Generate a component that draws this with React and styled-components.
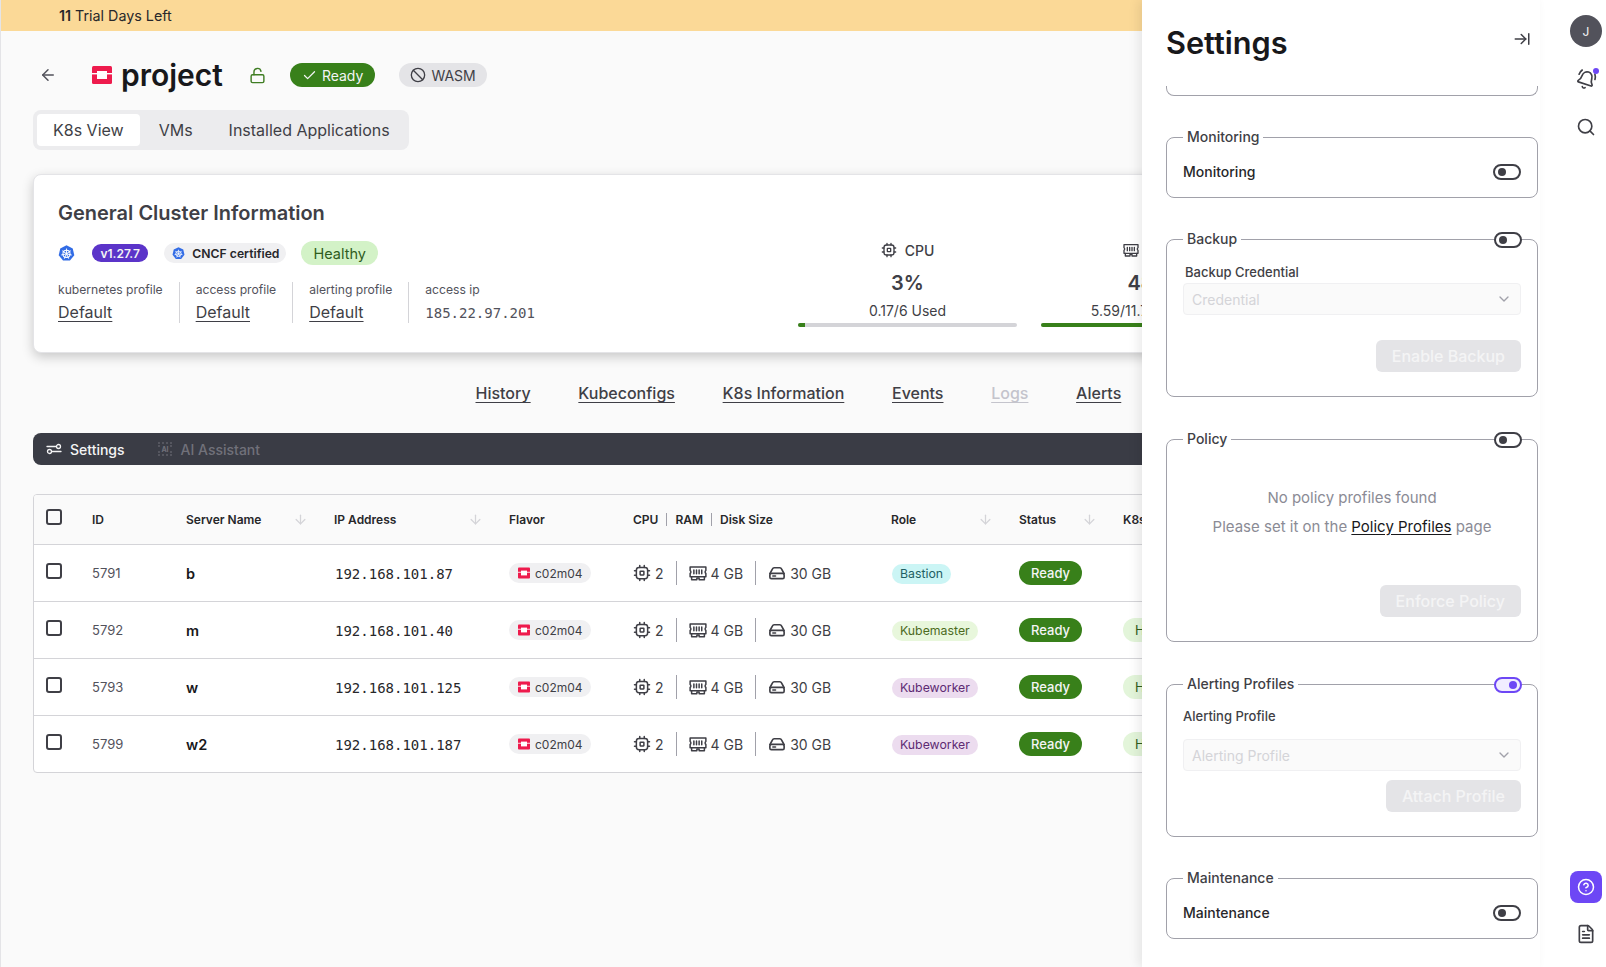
import styled, { createGlobalStyle } from "styled-components";
import {
  ArrowLeft,
  ArrowDown,
  ArrowRightToLine,
  Ban,
  BellRing,
  Check,
  ChevronDown,
  CircleHelp,
  FileText,
  LockOpen,
  Search,
} from "lucide-react";

// ------------------ Data ------------------

const servers = [
  { id: 5791, name: "b", ip: "192.168.101.87", role: "Bastion", health: false },
  { id: 5792, name: "m", ip: "192.168.101.40", role: "Kubemaster", health: true },
  { id: 5793, name: "w", ip: "192.168.101.125", role: "Kubeworker", health: true },
  { id: 5799, name: "w2", ip: "192.168.101.187", role: "Kubeworker", health: true },
];

const roleColors = {
  Bastion: ["#cbf5f5", "#1f5f63"],
  Kubemaster: ["#e8f7dc", "#4d6b1e"],
  Kubeworker: ["#ecdcef", "#5e2b73"],
};

const tableColumns = "58px 94px 148px 175px 124px 258px 128px 104px 1fr";

// ------------------ Styled Components ------------------

const GlobalStyle = createGlobalStyle`
  html, body {
    margin: 0;
    height: 100%;
    overflow: hidden;
  }

  body {
    font-family: "Inter", "Liberation Sans", sans-serif;
    color: #3f3f46;
    background: #fff;
  }

  * {
    box-sizing: border-box;
  }
`;

const Page = styled.div`
  display: flex;
  height: 967px;
  overflow: hidden;
`;

const Main = styled.main`
  flex: none;
  width: 1142px;
  overflow: hidden;
  background: #fafafa;
  border-left: 1px solid #e4e4e7;
`;

const TrialBanner = styled.div`
  height: 31px;
  padding-left: 58px;
  display: flex;
  align-items: center;
  background: #fbd997;
  color: #27272a;
  font-size: 14.3px;
  line-height: 20px;

  b {
    font-weight: 600;
    margin-right: 4px;
  }
`;

const Content = styled.div`
  width: 1500px;
  padding: 22px 0 0 32px;
`;

const TitleRow = styled.header`
  display: flex;
  align-items: center;
  height: 44px;
`;

const BackButton = styled.span`
  display: flex;
  width: 59px;
  padding-left: 6px;
  color: #52525b;
`;

const ProjectName = styled.h1`
  margin: 0 0 0 9px;
  font-size: 30px;
  line-height: 40px;
  font-weight: 600;
  color: #18181b;
`;

const LockButton = styled.span`
  display: flex;
  margin-left: 26px;
  color: #3f7d23;
`;

const StatePill = styled.span`
  display: inline-flex;
  align-items: center;
  gap: 5px;
  height: 24px;
  padding: 0 ${(p) => (p.$muted ? 11 : 12)}px;
  margin-left: ${(p) => p.$gap}px;
  border-radius: 12px;
  font-size: 14px;
  background: ${(p) => (p.$muted ? "#e4e4e7" : "#38801a")};
  color: ${(p) => (p.$muted ? "#3f3f46" : "#f4f4f5")};
`;

const Tabs = styled.nav`
  display: inline-flex;
  margin-top: 13px;
  padding: 4px 1px 4px 4px;
  height: 40px;
  background: #ececee;
  border-radius: 8px;
`;

const Tab = styled.span`
  display: flex;
  align-items: center;
  padding: 0 ${(p) => (p.$active ? 16 : 18)}px;
  margin-right: ${(p) => (p.$active ? 1 : 0)}px;
  border-radius: 4px;
  font-size: 16px;
  color: #3f3f46;
  background: ${(p) => (p.$active ? "#fff" : "transparent")};
`;

const Card = styled.section`
  display: flex;
  height: 179px;
  margin-top: 24px;
  padding: 24px 24px;
  background: #fff;
  border: 1px solid #e4e4e7;
  border-radius: 8px;
  box-shadow: 0 4px 12px rgba(0, 0, 0, 0.2);
`;

const CardInfo = styled.div`
  flex: none;
  width: 740px;
`;

const CardTitle = styled.h2`
  margin: 0;
  font-size: 20px;
  line-height: 28px;
  font-weight: 600;
  color: #3f3f46;
`;

const BadgeRow = styled.div`
  display: flex;
  align-items: center;
  height: 24px;
  margin-top: 14px;
`;

const VersionBadge = styled.span`
  display: flex;
  align-items: center;
  height: 18px;
  margin-left: 17px;
  padding: 0 8.5px;
  border-radius: 9px;
  background: #5b34c9;
  color: #f4f4f5;
  font-size: 12px;
  font-weight: 600;
`;

const CertBadge = styled.span`
  display: flex;
  align-items: center;
  gap: 7px;
  height: 20px;
  margin-left: 16px;
  padding: 0 7px 0 8px;
  border-radius: 10px;
  background: #f0f0f2;
  color: #27272a;
  font-size: 12.2px;
  font-weight: 600;
`;

const HealthBadge = styled.span`
  display: inline-flex;
  align-items: center;
  height: 24px;
  margin-left: ${(p) => p.$gap || 0}px;
  padding: 0 12px;
  border-radius: 12px;
  background: ${(p) => (p.$soft ? "#e3f5da" : "#d3f2c7")};
  color: #2f5d1e;
  font-size: ${(p) => (p.$soft ? 13 : 14.5)}px;
`;

const ProfileRow = styled.dl`
  display: flex;
  margin: 17px 0 0;
`;

const ProfileItem = styled.div`
  height: 41px;
  padding: 0 16px;
  border-right: 1px solid #d4d4d8;

  &:first-child {
    padding-left: 0;
  }

  &:last-child {
    border-right: none;
  }
`;

const ProfileLabel = styled.dt`
  font-size: 12.15px;
  line-height: 16px;
  color: #52525b;
`;

const ProfileLink = styled.dd`
  margin: 2px 0 0;
  font-size: 16px;
  line-height: 24px;
  color: #3f3f46;
  text-decoration: underline;
  text-underline-offset: 3px;
`;

const MonoText = styled.span`
  font-family: "DejaVu Sans Mono", monospace;
  font-size: 14px;
  color: ${(p) => p.$color || "#52525b"};
`;

const ProfileMono = styled(ProfileLink)`
  text-decoration: none;
`;

const Stats = styled.div`
  display: flex;
  gap: 24px;
  padding-top: 41px;
`;

const Stat = styled.div`
  width: 219px;
  text-align: center;
`;

const StatLabel = styled.div`
  display: flex;
  align-items: center;
  justify-content: center;
  gap: 8px;
  height: 20px;
  font-size: 14px;
  font-weight: 500;
`;

const StatValue = styled.div`
  margin-top: 9px;
  font-size: 20px;
  line-height: 28px;
  font-weight: 600;
`;

const StatUsed = styled.div`
  margin-top: 4px;
  font-size: 14px;
  line-height: 20px;
  white-space: nowrap;
`;

const StatTrack = styled.div`
  height: 4px;
  margin-top: 2px;
  border-radius: 2px;
  background: #d4d4d8;
  overflow: hidden;
`;

const StatFill = styled.div`
  height: 100%;
  background: #38801a;
`;

const SubNav = styled.nav`
  display: flex;
  gap: 47.7px;
  height: 24px;
  margin-top: 28px;
  padding-left: 442.5px;
`;

const SubLink = styled.span`
  font-size: 16px;
  line-height: 24px;
  font-weight: 500;
  text-decoration: underline;
  text-underline-offset: 3px;
  color: ${(p) => (p.$disabled ? "#c4c4cc" : "#3f3f46")};
`;

const DarkBar = styled.div`
  display: flex;
  align-items: center;
  height: 32px;
  margin-top: 28px;
  padding-left: 13px;
  border-radius: 8px;
  background: #3a3c45;
`;

const DarkTab = styled.span`
  display: flex;
  align-items: center;
  gap: 8px;
  margin-right: 32px;
  font-size: 14px;
  font-weight: 500;
  color: ${(p) => (p.$disabled ? "#71717a" : "#f4f4f5")};
`;

const Table = styled.div`
  margin-top: 29px;
  border: 1px solid #d4d4d8;
  border-radius: 4px;
  background: #fff;
  overflow: hidden;
`;

const TableHead = styled.div`
  display: grid;
  grid-template-columns: ${tableColumns};
  align-items: center;
  height: 50px;
  background: #fafafa;
  border-bottom: 1px solid #d4d4d8;
`;

const TableRow = styled.div`
  display: grid;
  grid-template-columns: ${tableColumns};
  align-items: center;
  height: 57px;
  border-bottom: 1px solid #d4d4d8;

  &:last-child {
    border-bottom: none;
    height: 56px;
  }
`;

const HeadCell = styled.div`
  display: flex;
  align-items: center;
  justify-content: ${(p) => (p.$sorted ? "space-between" : "flex-start")};
  padding-right: 26px;
  font-size: 12px;
  font-weight: 600;
  color: #27272a;
  white-space: nowrap;

  svg {
    color: #d4d4d8;
  }
`;

const HeadDivider = styled.i`
  width: 1px;
  height: 13px;
  margin: 0 8px;
  background: #a1a1aa;
`;

const CheckCell = styled.div`
  padding-left: 12px;
`;

const CheckBox = styled.span`
  display: block;
  width: 16px;
  height: 16px;
  margin-top: -5px;
  border: 2px solid #3f3f46;
  border-radius: 3px;
`;

const IdCell = styled.div`
  font-size: 13px;
  color: #52525b;
`;

const NameCell = styled.div`
  font-size: 14.5px;
  font-weight: 600;
  color: #18181b;
`;

const IpCell = styled.div`
  padding-left: 1px;
`;

const Chip = styled.span`
  display: inline-flex;
  align-items: center;
  gap: 5px;
  height: 20px;
  padding: 0 8px 0 9px;
  border-radius: 10px;
  background: #f0f0f2;
  font-size: 12px;
  color: #3f3f46;
`;

const SpecCell = styled.div`
  display: flex;
  align-items: center;
  font-size: 14px;
  color: #3f3f46;
`;

const Spec = styled.span`
  display: flex;
  align-items: center;
  gap: 4px;
`;

const SpecDivider = styled.i`
  width: 1px;
  height: 24px;
  margin: 0 12px;
  background: #a1a1aa;
`;

const RolePill = styled.span`
  display: inline-flex;
  align-items: center;
  height: 20px;
  margin-left: 1px;
  padding: 0 8px;
  border-radius: 10px;
  font-size: 12.3px;
  background: ${(p) => roleColors[p.$role][0]};
  color: ${(p) => roleColors[p.$role][1]};
`;

const ReadyPill = styled.span`
  display: inline-flex;
  align-items: center;
  height: 24px;
  padding: 0 12px;
  border-radius: 12px;
  font-size: 13px;
  font-weight: 500;
  background: #38801a;
  color: #f4f4f5;
`;

const Panel = styled.aside`
  position: relative;
  z-index: 1;
  display: flex;
  flex-direction: column;
  flex: none;
  width: 398px;
  background: #fff;
  box-shadow: -4px 0 10px rgba(0, 0, 0, 0.08);
`;

const PanelHeader = styled.header`
  display: flex;
  align-items: center;
  justify-content: space-between;
  flex: none;
  height: 86px;
  padding: 0 9px 0 24px;
  color: #3f3f46;
`;

const PanelTitle = styled.h2`
  margin: 0;
  font-size: 30.7px;
  line-height: 40px;
  font-weight: 600;
  color: #18181b;
`;

const CloseButton = styled.span`
  display: flex;
  margin-top: -8px;
`;

const PanelBody = styled.div`
  flex: 1;
  overflow: hidden;
  padding: 0 2px 0 24px;
`;

const ScrolledEdge = styled.div`
  height: 10px;
  margin-bottom: 31px;
  border: 1px solid #a1a1aa;
  border-top: none;
  border-radius: 0 0 8px 8px;
`;

const SectionWrap = styled.div`
  position: relative;
  margin-bottom: ${(p) => p.$after}px;
`;

const Fieldset = styled.fieldset`
  margin: 0;
  min-width: 0;
  height: ${(p) => p.$height}px;
  padding: 0 16px;
  border: 1px solid #a1a1aa;
  border-radius: 8px;
`;

const Legend = styled.legend`
  padding: 0 4px;
  font-size: 14px;
  line-height: 20px;
  font-weight: 500;
  color: #3f3f46;
`;

const SwitchRow = styled.div`
  display: flex;
  align-items: center;
  justify-content: space-between;
  height: 20px;
  margin-top: 14px;
  font-size: 14px;
  font-weight: 500;
  color: #27272a;

  > span {
    margin-top: 2px;
  }
`;

const Toggle = styled.span`
  display: flex;
  align-items: center;
  justify-content: ${(p) => (p.$on ? "flex-end" : "flex-start")};
  width: 28px;
  height: 16px;
  padding: 0 3px;
  border: 2px solid ${(p) => (p.$on ? "#6d47f5" : "#3f3f46")};
  border-radius: 8px;
  background: ${(p) => (p.$on ? "#f1edff" : "#fff")};

  &::after {
    content: "";
    width: 8px;
    height: 8px;
    border-radius: 50%;
    background: ${(p) => (p.$on ? "#6d47f5" : "#3f3f46")};
  }
`;

const LegendToggle = styled.div`
  position: absolute;
  top: 3px;
  right: 16px;
`;

const FieldLabel = styled.div`
  margin-top: ${(p) => p.$top}px;
  padding-left: ${(p) => p.$inset || 0}px;
  font-size: 13px;
  line-height: 18px;
  font-weight: 500;
  color: #3f3f46;
`;

const SelectBox = styled.div`
  display: flex;
  align-items: center;
  justify-content: space-between;
  height: 32px;
  margin-top: ${(p) => p.$top}px;
  padding: 0 8px;
  border: 1px solid #f0f0f2;
  border-radius: 4px;
  background: #fafafa;
  font-size: 14px;
  color: #d4d4d8;

  svg {
    color: #a1a1aa;
  }
`;

const ButtonRow = styled.div`
  display: flex;
  justify-content: flex-end;
  margin-top: ${(p) => p.$top}px;
`;

const DisabledButton = styled.button`
  height: 32px;
  padding: 0 16px;
  border: none;
  border-radius: 6px;
  background: #e4e4e7;
  color: #f4f4f5;
  font-family: inherit;
  font-size: 16px;
  font-weight: 500;
`;

const EmptyNote = styled.div`
  margin-top: 35px;
  height: 78px;
  text-align: center;
  font-size: 15px;
  line-height: 28.5px;
  color: #8b8b95;

  a {
    color: #18181b;
    text-decoration: underline;
    text-underline-offset: 2px;
  }
`;

const Rail = styled.aside`
  display: flex;
  flex-direction: column;
  justify-content: space-between;
  flex: 1;
  padding: 15px 4px 23px 30px;
  background: #fff;
`;

const RailGroup = styled.div`
  display: flex;
  flex-direction: column;
  align-items: center;
`;

const Avatar = styled.span`
  display: flex;
  align-items: center;
  justify-content: center;
  width: 32px;
  height: 32px;
  border-radius: 50%;
  background: #52525b;
  color: #f4f4f5;
  font-size: 12px;
`;

const RailIcon = styled.span`
  position: relative;
  display: flex;
  margin-top: ${(p) => p.$top}px;
  color: #3f3f46;
`;

const TiltedBell = styled(BellRing)`
  transform: rotate(18deg);
`;

const NotifyDot = styled.i`
  position: absolute;
  top: -2px;
  right: -3px;
  width: 6px;
  height: 6px;
  border-radius: 50%;
  background: #6d47f5;
`;

const HelpButton = styled.span`
  display: flex;
  align-items: center;
  justify-content: center;
  width: 32px;
  height: 32px;
  border-radius: 8px;
  background: #6d47f5;
  color: #fff;
`;

// ------------------ Icons ------------------

function ChipIcon({ size = 18 }) {
  return (
    <svg width={size} height={size} viewBox="0 0 24 24" fill="none" stroke="currentColor" strokeWidth="2" strokeLinecap="round">
      <rect x="4.5" y="4.5" width="15" height="15" rx="3.5" />
      <rect x="9.5" y="9.5" width="5" height="5" rx="0.5" />
      <path d="M9 2v2.5M15 2v2.5M9 19.5V22M15 19.5V22M2 9h2.5M2 15h2.5M19.5 9H22M19.5 15H22" />
    </svg>
  );
}

function RamIcon({ size = 18 }) {
  return (
    <svg width={size} height={size} viewBox="0 0 24 24" fill="none" stroke="currentColor" strokeWidth="2" strokeLinecap="round" strokeLinejoin="round">
      <path d="M1.500 4h21v4.500a2.500 2.500 0 0 0 0 4V17h-21v-4.500a2.500 2.500 0 0 0 0-4z" />
      <path d="M3.500 17v4h7v-2.500h3V21h7v-4" />
      <path d="M6.500 8v5M10 8v5M13.500 8v5M17 8v5" />
    </svg>
  );
}

function DiskIcon({ size = 18 }) {
  return (
    <svg width={size} height={size} viewBox="0 0 24 24" fill="none" stroke="currentColor" strokeWidth="2.2" strokeLinecap="round" strokeLinejoin="round">
      <path d="M2.500 13 6 6.500A2.500 2.500 0 0 1 8.200 5h7.600A2.500 2.500 0 0 1 18 6.500l3.500 6.500" />
      <rect x="2.500" y="12.500" width="19" height="7" rx="2" />
      <path d="M6.500 16h3.500" />
    </svg>
  );
}

function SlidersIcon() {
  return (
    <svg width="16" height="12" viewBox="0 0 16 12" fill="none" stroke="currentColor" strokeWidth="1.3" strokeLinecap="round">
      <path d="M1 3.500h9M5.700 8.500H15" />
      <circle cx="12.500" cy="3.500" r="2" />
      <circle cx="3.500" cy="8.500" r="2" />
    </svg>
  );
}

function ShiftLogo({ size = 20 }) {
  return (
    <svg width={size} height={size} viewBox="0 0 20 20">
      <rect x="0" y="1" width="20" height="18" rx="1.5" fill="#ee1b4d" />
      <rect x="5" y="6" width="10" height="8" fill="#fff" />
      <rect x="0" y="8" width="5" height="1.4" fill="#fff" />
      <rect x="15" y="8" width="5" height="1.4" fill="#fff" />
    </svg>
  );
}

function KubeIcon({ size = 17 }) {
  const angles = [0, 51.4, 102.8, 154.2, 205.6, 257, 308.4];
  return (
    <svg width={size} height={size} viewBox="0 0 24 24">
      <polygon points="12,0.5 20.8,4.8 23,14.4 16.9,22 7.1,22 1,14.4 3.2,4.8" fill="#326ce5" />
      <circle cx="12" cy="12.5" r="5" fill="none" stroke="#fff" strokeWidth="1.5" />
      {angles.map((a) => (
        <line key={a} x1="12" y1="12.5" x2="12" y2="5" stroke="#fff" strokeWidth="1.3" transform={`rotate(${a} 12 12.5)`} />
      ))}
    </svg>
  );
}

function AiIcon() {
  return (
    <svg width="16" height="16" viewBox="0 0 16 16" fill="none" stroke="#71717a" strokeWidth="1">
      <path d="M2 1v2M1 5h2M6 1v2M10 1v2M14 1v2M13 5h2M1 11h2M13 11h2M2 13v2M6 13v2M10 13v2M14 13v2" />
      <text x="8" y="10.5" textAnchor="middle" fontSize="7" fontWeight="700" fill="#71717a" stroke="none">
        AI
      </text>
    </svg>
  );
}

// ------------------ Componente ------------------

function SwitchSection({ title, after = 31 }) {
  return (
    <SectionWrap $after={after}>
      <Fieldset $height={71}>
        <Legend>{title}</Legend>
        <SwitchRow>
          {title}
          <Toggle />
        </SwitchRow>
      </Fieldset>
    </SectionWrap>
  );
}

function Section({ title, height, on, after = 32, children }) {
  return (
    <SectionWrap $after={after}>
      <Fieldset $height={height}>
        <Legend>{title}</Legend>
        {children}
      </Fieldset>
      <LegendToggle>
        <Toggle $on={on} />
      </LegendToggle>
    </SectionWrap>
  );
}

export default function App() {
  return (
    <>
      <GlobalStyle />
      <Page>
        <Main>
          <TrialBanner>
            <b>11</b> Trial Days Left
          </TrialBanner>
          <Content>
            <TitleRow>
              <BackButton>
                <ArrowLeft size={18} />
              </BackButton>
              <ShiftLogo />
              <ProjectName>project</ProjectName>
              <LockButton>
                <LockOpen size={17} />
              </LockButton>
              <StatePill $gap={24}>
                <Check size={15} /> Ready
              </StatePill>
              <StatePill $muted $gap={24}>
                <Ban size={16} /> WASM
              </StatePill>
            </TitleRow>

            <Tabs>
              <Tab $active>K8s View</Tab>
              <Tab>VMs</Tab>
              <Tab>Installed Applications</Tab>
            </Tabs>

            <Card>
              <CardInfo>
                <CardTitle>General Cluster Information</CardTitle>
                <BadgeRow>
                  <KubeIcon />
                  <VersionBadge>v1.27.7</VersionBadge>
                  <CertBadge>
                    <KubeIcon size={13} /> CNCF certified
                  </CertBadge>
                  <HealthBadge $gap={15}>Healthy</HealthBadge>
                </BadgeRow>
                <ProfileRow>
                  <ProfileItem>
                    <ProfileLabel>kubernetes profile</ProfileLabel>
                    <ProfileLink>Default</ProfileLink>
                  </ProfileItem>
                  <ProfileItem>
                    <ProfileLabel>access profile</ProfileLabel>
                    <ProfileLink>Default</ProfileLink>
                  </ProfileItem>
                  <ProfileItem>
                    <ProfileLabel>alerting profile</ProfileLabel>
                    <ProfileLink>Default</ProfileLink>
                  </ProfileItem>
                  <ProfileItem>
                    <ProfileLabel>access ip</ProfileLabel>
                    <ProfileMono>
                      <MonoText>185.22.97.201</MonoText>
                    </ProfileMono>
                  </ProfileItem>
                </ProfileRow>
              </CardInfo>
              <Stats>
                <Stat>
                  <StatLabel>
                    <ChipIcon size={16} /> CPU
                  </StatLabel>
                  <StatValue>3%</StatValue>
                  <StatUsed>0.17/6 Used</StatUsed>
                  <StatTrack>
                    <StatFill style={{ width: "3%" }} />
                  </StatTrack>
                </Stat>
                <Stat>
                  <StatLabel>
                    <RamIcon size={16} /> RAM
                  </StatLabel>
                  <StatValue>48%</StatValue>
                  <StatUsed>5.59/11.7 GB Used</StatUsed>
                  <StatTrack>
                    <StatFill style={{ width: "48%" }} />
                  </StatTrack>
                </Stat>
              </Stats>
            </Card>

            <SubNav>
              <SubLink>History</SubLink>
              <SubLink>Kubeconfigs</SubLink>
              <SubLink>K8s Information</SubLink>
              <SubLink>Events</SubLink>
              <SubLink $disabled>Logs</SubLink>
              <SubLink>Alerts</SubLink>
            </SubNav>

            <DarkBar>
              <DarkTab>
                <SlidersIcon /> Settings
              </DarkTab>
              <DarkTab $disabled>
                <AiIcon /> AI Assistant
              </DarkTab>
            </DarkBar>

            <Table>
              <TableHead>
                <CheckCell>
                  <CheckBox />
                </CheckCell>
                <HeadCell>ID</HeadCell>
                <HeadCell $sorted>
                  Server Name <ArrowDown size={15} />
                </HeadCell>
                <HeadCell $sorted>
                  IP Address <ArrowDown size={15} />
                </HeadCell>
                <HeadCell>Flavor</HeadCell>
                <HeadCell>
                  CPU <HeadDivider /> RAM <HeadDivider /> Disk Size
                </HeadCell>
                <HeadCell $sorted>
                  Role <ArrowDown size={15} />
                </HeadCell>
                <HeadCell $sorted>
                  Status <ArrowDown size={15} />
                </HeadCell>
                <HeadCell>K8s Status</HeadCell>
              </TableHead>
              {servers.map((server) => (
                <TableRow key={server.id}>
                  <CheckCell>
                    <CheckBox />
                  </CheckCell>
                  <IdCell>{server.id}</IdCell>
                  <NameCell>{server.name}</NameCell>
                  <IpCell>
                    <MonoText $color="#27272a">{server.ip}</MonoText>
                  </IpCell>
                  <div>
                    <Chip>
                      <ShiftLogo size={12} /> c02m04
                    </Chip>
                  </div>
                  <SpecCell>
                    <Spec>
                      <ChipIcon /> 2
                    </Spec>
                    <SpecDivider />
                    <Spec>
                      <RamIcon /> 4 GB
                    </Spec>
                    <SpecDivider />
                    <Spec>
                      <DiskIcon /> 30 GB
                    </Spec>
                  </SpecCell>
                  <div>
                    <RolePill $role={server.role}>{server.role}</RolePill>
                  </div>
                  <div>
                    <ReadyPill>Ready</ReadyPill>
                  </div>
                  <div>{server.health && <HealthBadge $soft>Healthy</HealthBadge>}</div>
                </TableRow>
              ))}
            </Table>
          </Content>
        </Main>

        <Panel>
          <PanelHeader>
            <PanelTitle>Settings</PanelTitle>
            <CloseButton>
              <ArrowRightToLine size={18} />
            </CloseButton>
          </PanelHeader>
          <PanelBody>
            <ScrolledEdge />
            <SwitchSection title="Monitoring" />

            <Section title="Backup" height={168}>
              <FieldLabel $top={14} $inset={2}>
                Backup Credential
              </FieldLabel>
              <SelectBox $top={2}>
                Credential
                <ChevronDown size={16} />
              </SelectBox>
              <ButtonRow $top={25}>
                <DisabledButton disabled>Enable Backup</DisabledButton>
              </ButtonRow>
            </Section>

            <Section title="Policy" height={213}>
              <EmptyNote>
                No policy profiles found
                <br />
                Please set it on the <a href="#profiles">Policy Profiles</a> page
              </EmptyNote>
              <ButtonRow $top={23}>
                <DisabledButton disabled>Enforce Policy</DisabledButton>
              </ButtonRow>
            </Section>

            <Section title="Alerting Profiles" height={163} on after={31}>
              <FieldLabel $top={13}>Alerting Profile</FieldLabel>
              <SelectBox $top={14}>
                Alerting Profile
                <ChevronDown size={16} />
              </SelectBox>
              <ButtonRow $top={9}>
                <DisabledButton disabled>Attach Profile</DisabledButton>
              </ButtonRow>
            </Section>

            <SwitchSection title="Maintenance" />
          </PanelBody>
        </Panel>

        <Rail>
          <RailGroup>
            <Avatar>J</Avatar>
            <RailIcon $top={23}>
              <TiltedBell size={20} />
              <NotifyDot />
            </RailIcon>
            <RailIcon $top={27}>
              <Search size={20} />
            </RailIcon>
          </RailGroup>
          <RailGroup>
            <HelpButton>
              <CircleHelp size={18} />
            </HelpButton>
            <RailIcon $top={21}>
              <FileText size={20} />
            </RailIcon>
          </RailGroup>
        </Rail>
      </Page>
    </>
  );
}
